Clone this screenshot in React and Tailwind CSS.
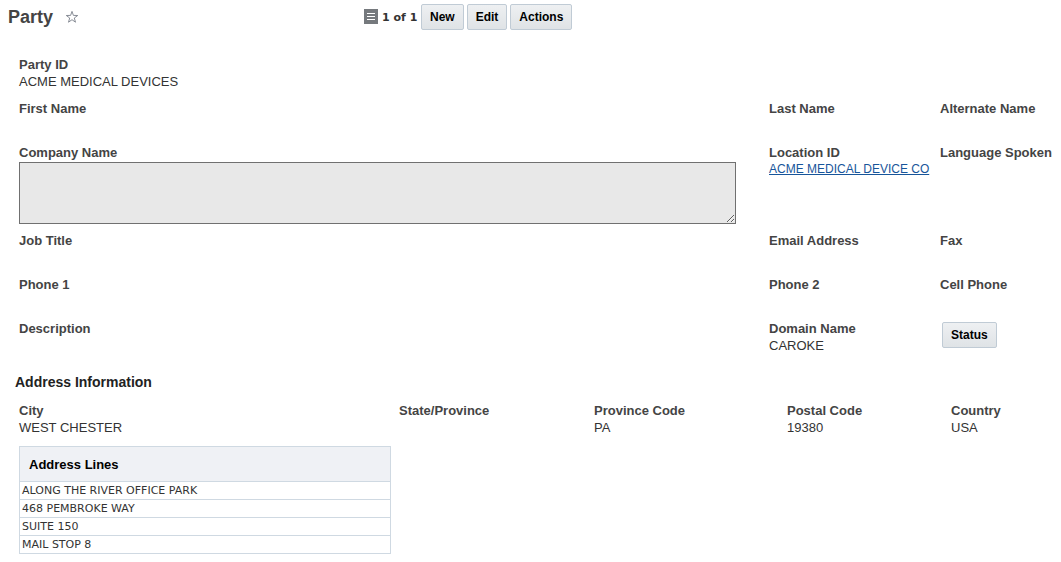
import React from "react";

function Field({ label, children }) {
  return (
    <div className="min-w-0">
      <dt className="font-bold whitespace-nowrap text-[#444]">{label}</dt>
      <dd className="whitespace-nowrap">{children}</dd>
    </div>
  );
}

function Button({ children }) {
  return (
    <button
      type="button"
      className="h-[26px] rounded-xs border border-[#c0cbd5] bg-linear-to-b from-[#eef0f2] to-[#dfe3e6] px-2 text-[12px] leading-4 font-bold text-black"
    >
      {children}
    </button>
  );
}

function StarIcon() {
  return (
    <svg viewBox="0 0 14 14" className="size-3.5" fill="none" stroke="#7b808a" strokeWidth="0.9">
      <path d="M7 1.4 8.4 5.4 12.7 5.5 9.3 8 10.5 12.2 7 9.7 3.5 12.2 4.7 8 1.3 5.5 5.6 5.4Z" />
    </svg>
  );
}

function ListIcon() {
  return (
    <svg viewBox="0 0 14 16" className="h-4 w-3.5" shapeRendering="crispEdges">
      <rect width="14" height="15" fill="#75797d" />
      <path d="M3 4.5h8M3 7.5h8M3 10.5h8" stroke="#fff" />
    </svg>
  );
}

const lines = ["ALONG THE RIVER OFFICE PARK", "468 PEMBROKE WAY", "SUITE 150", "MAIL STOP 8"];

export default function App() {
  return (
    <main className="bg-white font-['Liberation_Sans',Arial,sans-serif] text-[13px] leading-[17px] text-[#333]">
      <header className="flex items-center pt-1 pl-2">
        <div className="flex w-[356px] items-center gap-3">
          <h1 className="text-[18px] leading-6 font-bold text-[#444]">Party</h1>
          <button type="button" aria-label="Add to favorites">
            <StarIcon />
          </button>
        </div>
        <div className="flex items-center gap-[3px]">
          <ListIcon />
          <span className="w-[37px] pl-px font-['DejaVu_Sans',Verdana,sans-serif] text-[11px] font-bold whitespace-nowrap">
            1 of 1
          </span>
          <Button>New</Button>
          <Button>Edit</Button>
          <Button>Actions</Button>
        </div>
      </header>

      <dl className="mt-[26px] grid auto-rows-[44px] grid-cols-[minmax(0,1fr)_171px_112px] pr-[9px] pl-[19px]">
        <div className="col-span-3">
          <Field label="Party ID">ACME MEDICAL DEVICES</Field>
        </div>
        <Field label="First Name" />
        <Field label="Last Name" />
        <Field label="Alternate Name" />
        <div className="row-span-2 pr-[33px]">
          <dt>
            <label htmlFor="company" className="block font-bold text-[#444]">
              Company Name
            </label>
          </dt>
          <dd className="mt-px">
            <textarea
              id="company"
              readOnly
              className="block h-[62px] w-full border border-[#707070] bg-[#e8e8e8]"
            />
          </dd>
        </div>
        <div className="row-span-2">
          <Field label="Location ID">
            <a href="#location" className="block text-[12px] leading-4 text-[#17559a] underline underline-offset-1">
              ACME MEDICAL DEVICE CO
            </a>
          </Field>
        </div>
        <div className="row-span-2">
          <Field label="Language Spoken" />
        </div>
        <Field label="Job Title" />
        <Field label="Email Address" />
        <Field label="Fax" />
        <Field label="Phone 1" />
        <Field label="Phone 2" />
        <Field label="Cell Phone" />
        <Field label="Description" />
        <Field label="Domain Name">CAROKE</Field>
        <div className="p-0.5">
          <Button>Status</Button>
        </div>
      </dl>

      <section className="pb-2">
        <h2 className="mt-2 pl-[15px] text-[14px] leading-5 font-bold text-[#222]">Address Information</h2>
        <dl className="mt-2.5 grid grid-cols-[380fr_195fr_193fr_164fr_110fr] pl-[19px]">
          <Field label="City">WEST CHESTER</Field>
          <Field label="State/Province" />
          <Field label="Province Code">PA</Field>
          <Field label="Postal Code">19380</Field>
          <Field label="Country">USA</Field>
        </dl>
        <table className="mt-2.5 ml-[19px] w-[372px] border-collapse border border-[#cfd9e2]">
          <thead>
            <tr className="h-[35px] border-b border-[#cfd9e2] bg-[#eff1f5]">
              <th scope="col" className="px-[9px] text-left font-bold text-black">
                Address Lines
              </th>
            </tr>
          </thead>
          <tbody className="font-['DejaVu_Sans',Verdana,sans-serif] text-[11px] leading-4">
            {lines.map((line) => (
              <tr key={line} className="h-[18px] border-b border-[#cfd9e2]">
                <td className="px-0.5 pt-px">{line}</td>
              </tr>
            ))}
          </tbody>
        </table>
      </section>
    </main>
  );
}
